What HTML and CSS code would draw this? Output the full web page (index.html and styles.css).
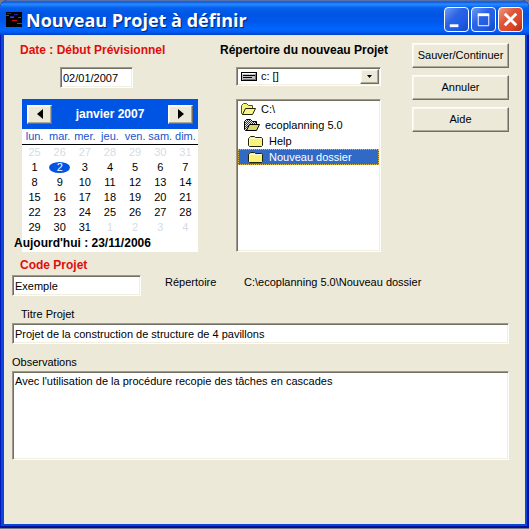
FILE: index.html
```html
<!DOCTYPE html>
<html lang="fr">
<head>
<meta charset="utf-8">
<meta name="viewport" content="width=device-width, initial-scale=1">
<title>Nouveau Projet à définir</title>
<link rel="stylesheet" href="styles.css">
</head>
<body>
<svg class="defs" aria-hidden="true">
  <symbol id="open-folder" viewBox="0 0 16 12">
    <path d="M1.500 10.500V2.500L3.500 .5H6.500L8.500 2.500H12.500V5.500L10 11.500H2.500Z" fill="#f7f27c" stroke="#55551c"/>
    <path d="M2.500 11.500L5.500 5.500H15.500L12.500 11.500Z" fill="#f9f48a" stroke="#22220a"/>
  </symbol>
  <symbol id="folder" viewBox="0 0 16 12">
    <path d="M1.500 2.500L2.500 1.500H6.500L7.500 2.500H13.500L14.500 3.500V10.500L13.500 11.500H1.500L.5 10.500V3.500Z" fill="#f8f27c" stroke="#22220a"/>
    <path d="M1.500 10V4.500L2.500 3.500H13" fill="none" stroke="#fdfbc8"/>
  </symbol>
  <symbol id="current-folder" viewBox="0 0 16 12">
    <pattern id="dither" width="2" height="2" patternUnits="userSpaceOnUse">
      <rect width="2" height="2" fill="#e8e8e8"/><path d="M0 0H1V1H0ZM1 1H2V2H1Z" fill="#333"/>
    </pattern>
    <path d="M.5 10.500V2.500L2.500 .5H6.500L8.500 2.500H12.500V5.500L10 11.500H1.500Z" fill="url(#dither)" stroke="#000"/>
    <path d="M2.500 11.500L5.500 5.500H15.500L12.500 11.500Z" fill="#d8d66a" stroke="#000"/>
  </symbol>
</svg>
<main class="window">
  <header class="titlebar">
    <svg class="app-icon" viewBox="0 0 16 15" aria-hidden="true">
      <rect width="16" height="15" fill="#000"/>
      <path d="M1 1.500H5M8 2.500H12M4 4.500H8" stroke="#2020b0"/>
      <path d="M0 3.500H3M4 5.500H8M6 8.500H11M11 11.500H16M12 5.500H15" stroke="#e01010"/>
    </svg>
    <h1 class="title">Nouveau Projet à définir</h1>
    <div class="caption-buttons">
      <button class="caption" type="button" aria-label="Réduire"><svg viewBox="0 0 24 24"><path d="M5 17H14V20H5Z" fill="#fff"/></svg></button>
      <button class="caption" type="button" aria-label="Agrandir"><svg viewBox="0 0 24 24"><path d="M6.500 7V18.500H17.500V7Z" fill="none" stroke="#fff"/><path d="M6 7H18" stroke="#fff" stroke-width="3"/></svg></button>
      <button class="caption close" type="button" aria-label="Fermer"><svg viewBox="0 0 24 24"><path d="M6 6L18 18M18 6L6 18" stroke="#fff" stroke-width="3"/></svg></button>
    </div>
  </header>
  <form class="content">
    <div class="top">
      <section class="dates">
        <label class="heading required" for="date">Date : Début Prévisionnel</label>
        <input class="field date" id="date" type="text" value="02/01/2007">
        <div class="calendar">
          <div class="month">
            <button class="raised arrow" type="button" aria-label="Mois précédent"><svg viewBox="0 0 6 10"><path d="M6 0V10L0 5Z"/></svg></button>
            <span>janvier 2007</span>
            <button class="raised arrow" type="button" aria-label="Mois suivant"><svg viewBox="0 0 6 10"><path d="M0 0V10L6 5Z"/></svg></button>
          </div>
          <table class="days">
            <thead><tr><th>lun.</th><th>mar.</th><th>mer.</th><th>jeu.</th><th>ven.</th><th>sam.</th><th>dim.</th></tr></thead>
            <tbody>
              <tr class="other"><td>25</td><td>26</td><td>27</td><td>28</td><td>29</td><td>30</td><td>31</td></tr>
              <tr><td>1</td><td><span class="selected-day">2</span></td><td>3</td><td>4</td><td>5</td><td>6</td><td>7</td></tr>
              <tr><td>8</td><td>9</td><td>10</td><td>11</td><td>12</td><td>13</td><td>14</td></tr>
              <tr><td>15</td><td>16</td><td>17</td><td>18</td><td>19</td><td>20</td><td>21</td></tr>
              <tr><td>22</td><td>23</td><td>24</td><td>25</td><td>26</td><td>27</td><td>28</td></tr>
              <tr><td>29</td><td>30</td><td>31</td><td class="other">1</td><td class="other">2</td><td class="other">3</td><td class="other">4</td></tr>
            </tbody>
          </table>
          <p class="today">Aujourd'hui : 23/11/2006</p>
        </div>
      </section>
      <section class="folders">
        <label class="heading" for="drive">Répertoire du nouveau Projet</label>
        <div class="combo">
          <select class="field drive" id="drive"><option>c: []</option></select>
          <svg class="drive-icon" viewBox="0 0 16 9" aria-hidden="true"><rect x=".5" y=".5" width="15" height="8" fill="#c0c0c0" stroke="#000"/><path d="M2 3.500H14M2 5.500H11" stroke="#000"/><path d="M1 1.500H14" stroke="#fff"/><path d="M2 7.500H15M14.500 2V8" stroke="#777"/></svg>
          <span class="raised drop" aria-hidden="true"><svg viewBox="0 0 5 3"><path d="M0 0H5L2.500 3Z"/></svg></span>
        </div>
        <ul class="field tree">
          <li><button class="node" type="button"><svg><use href="#open-folder"/></svg>C:\</button></li>
          <li><button class="node level-1" type="button"><svg><use href="#current-folder"/></svg>ecoplanning 5.0</button></li>
          <li><button class="node level-2" type="button"><svg><use href="#folder"/></svg>Help</button></li>
          <li><button class="node level-2 current" type="button"><svg><use href="#folder"/></svg>Nouveau dossier</button></li>
        </ul>
      </section>
      <div class="actions">
        <button class="raised action" type="submit">Sauver/Continuer</button>
        <button class="raised action" type="button">Annuler</button>
        <button class="raised action" type="button">Aide</button>
      </div>
    </div>
    <label class="heading required" for="code">Code Projet</label>
    <div class="code-row">
      <input class="field code" id="code" type="text" value="Exemple">
      <span class="path-label">Répertoire</span>
      <span>C:\ecoplanning 5.0\Nouveau dossier</span>
    </div>
    <label class="caption-text indent" for="project-title">Titre Projet</label>
    <input class="field" id="project-title" type="text" value="Projet de la construction de structure de 4 pavillons">
    <label class="caption-text" for="notes">Observations</label>
    <textarea class="field notes" id="notes">Avec l'utilisation de la procédure recopie des tâches en cascades</textarea>
  </form>
</main>
</body>
</html>
```
FILE: styles.css
```css
* { box-sizing: border-box; }

body {
  margin: 0;
  background: #77778a;
  color: #000;
  font: 11px/15px "Liberation Sans", Arial, sans-serif;
}

button, input, select, textarea { font: inherit; color: inherit; }
button { padding: 0; }
svg { display: block; }
.defs { position: absolute; width: 0; height: 0; }

.window {
  display: flex;
  flex-direction: column;
  min-height: calc(100vh - 1px);
  border-radius: 8px 8px 0 0;
  background: #0a46d8;
  box-shadow: inset 1px 0 #0019b8, inset -2px 0 #0010a0, inset 0 -2px #00109a;
  padding: 0 4px 4px;
}

.titlebar {
  display: flex;
  align-items: center;
  height: 35px;
  margin: 0 -4px;
  padding: 4px 6px 0;
  border-radius: 8px 8px 0 0;
  background: linear-gradient(#6f7a98 0, #0a57dd 2px, #2a8bff 4px, #0560ee 8px, #0054e3 14px, #0058ec 22px, #0066ff 29px, #005cf5 32px, #0040c0 35px);
}
.app-icon { width: 16px; height: 15px; }
.title {
  flex: 1;
  margin: 0 0 0 4px;
  color: #fff;
  font: bold 18px/24px "Open Sans", "Noto Sans", sans-serif;
  text-shadow: 1px 1px 1px #00227a;
  white-space: nowrap;
}
.caption-buttons { display: flex; gap: 2px; }
.caption {
  width: 25px;
  height: 25px;
  border: 1px solid #fff;
  border-radius: 4px;
  background: linear-gradient(135deg, #6f9cf5, #2a63e4 40%, #1f5be6 70%, #1748c0);
}
.close { background: linear-gradient(135deg, #ee9a80, #e0553a 40%, #d9472a 70%, #b02c10); }

.content {
  display: flex;
  flex: 1;
  flex-direction: column;
  padding: 8px 16px 16px 8px;
  background: #ece9d8;
}
.top { display: flex; gap: 8px; }
.heading {
  padding-left: 8px;
  font-size: 12px;
  font-weight: bold;
  line-height: 14px;
  white-space: nowrap;
}
.required { color: #e00d0d; }

.field {
  width: 100%;
  height: 21px;
  margin: 0;
  padding: 0 2px;
  border: 1px solid;
  border-color: #9d9a8b #fff #fff #9d9a8b;
  border-radius: 0;
  outline: 0;
  background: #fff;
  box-shadow: inset 1px 1px #716f64, inset -1px -1px #f1efe2;
}
.raised {
  border: 1px solid;
  border-color: #fffef8 #716f64 #716f64 #fffef8;
  border-radius: 0;
  background: #ece9d8;
  box-shadow: inset -1px -1px #aca899, inset 1px 1px #f8f6ee;
}

.dates { display: flex; flex: none; flex-direction: column; width: 192px; }
.date { width: 73px; margin: 10px 0 11px 48px; }
.calendar {
  display: flex;
  flex-direction: column;
  width: 176px;
  height: 153px;
  margin-left: 10px;
  background: #fff;
}
.month {
  display: flex;
  align-items: center;
  justify-content: space-between;
  height: 30px;
  padding: 0 5px;
  background: #0054e3;
  color: #fff;
  font-size: 12px;
  font-weight: bold;
}
.arrow { display: grid; place-items: center; width: 25px; height: 19px; }
.arrow svg { width: 6px; height: 10px; }
.days { width: 100%; table-layout: fixed; border-collapse: collapse; text-align: center; }
.days th, .days td { height: 15px; padding: 0; line-height: 15px; }
.days th { border-bottom: 1px solid #000; color: #1555cc; font-weight: normal; }
.other { color: #d5dce4; }
.selected-day {
  display: block;
  width: 21px;
  height: 11px;
  margin: 0 auto;
  border-radius: 50%;
  background: #0054e3;
  color: #fff;
  line-height: 11px;
}
.today { margin: 0 0 0 -8px; font-size: 12px; font-weight: bold; line-height: 17px; white-space: nowrap; }

.folders { display: flex; flex: 1; flex-direction: column; min-width: 0; }
.combo { position: relative; margin: 10px 23px 13px 24px; }
.drive { display: block; height: 19px; padding-left: 24px; appearance: none; }
.drive-icon { position: absolute; top: 5px; left: 5px; width: 16px; height: 9px; pointer-events: none; }
.drop {
  position: absolute;
  top: 2px;
  right: 2px;
  display: grid;
  place-items: center;
  width: 19px;
  height: 15px;
  pointer-events: none;
}
.drop svg { width: 5px; height: 3px; }
.tree { width: auto; height: 153px; margin: 0 23px 0 24px; padding: 1px; list-style: none; }
.node {
  display: flex;
  align-items: center;
  gap: 5px;
  width: 100%;
  height: 16px;
  padding-left: 1px;
  border: 1px solid transparent;
  background: none;
  white-space: nowrap;
}
.node svg { width: 16px; height: 12px; }
.level-1 { padding-left: 5px; }
.level-2 { padding-left: 9px; }
.current { border: 1px dotted #ddb850; background: #316ac5; color: #fff; }

.actions { display: flex; flex: none; flex-direction: column; gap: 7px; width: 97px; }
.action { height: 25px; font-size: 11px; white-space: nowrap; }

.content > .heading { margin-top: 6px; align-self: flex-start; }
.code-row { display: flex; align-items: flex-start; margin-top: 3px; line-height: 14px; }
.code { width: 129px; margin-right: 24px; }
.path-label { width: 79px; }
.caption-text { margin: 11px 0 2px; line-height: 14px; align-self: flex-start; }
.indent { padding-left: 9px; }
.notes { height: 89px; padding: 2px; line-height: 15px; resize: none; overflow: hidden; }
```
